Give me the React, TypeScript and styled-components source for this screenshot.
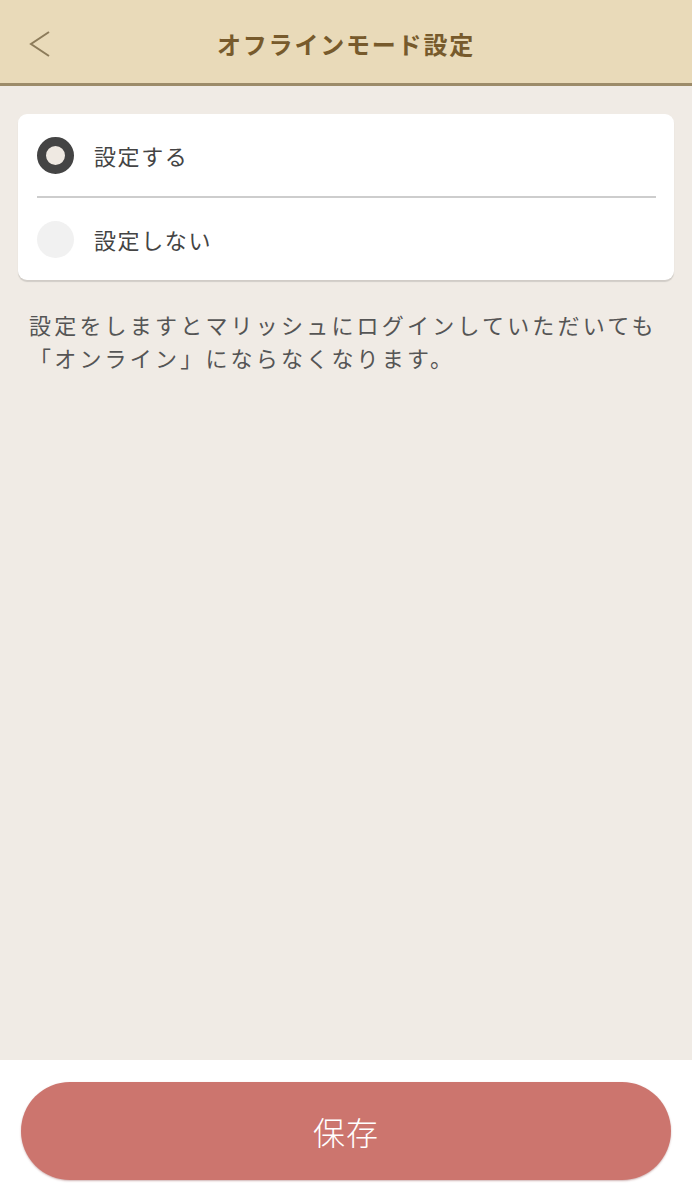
import React, { useState } from "react";
import styled, { createGlobalStyle } from "styled-components";

const GlobalStyle = createGlobalStyle`
  html, body { margin: 0; padding: 0; }
  body {
    font-family: "Noto Sans CJK JP", "Noto Sans", sans-serif;
    background: #f0ebe5;
  }
  * { box-sizing: border-box; }
`;

const Page = styled.div`
  width: 692px;
  height: 1200px;
  display: flex;
  flex-direction: column;
  background: #f0ebe5;
`;

const Header = styled.header`
  height: 86px;
  flex: none;
  background: #e9dab9;
  border-bottom: 3px solid #9c8b69;
  display: grid;
  grid-template-columns: 80px 1fr 80px;
  align-items: center;
  padding-top: 4px;
`;

const BackButton = styled.button`
  border: none;
  background: none;
  padding: 0 0 0 28px;
  height: 100%;
  display: flex;
  align-items: center;
  cursor: pointer;
`;

const Title = styled.h1`
  margin: 0;
  text-align: center;
  font-size: 24px;
  font-weight: 700;
  color: #775a2c;
  letter-spacing: 1.8px;
`;

const Content = styled.main`
  flex: 1;
  padding: 28px 18px 0 18px;
  display: flex;
  flex-direction: column;
`;

const Card = styled.div`
  background: #fff;
  border-radius: 9px;
  box-shadow: 0 2px 1px rgba(0, 0, 0, 0.13);
  padding: 0 18px 0 19px;
`;

const Option = styled.label<{ $last?: boolean }>`
  height: ${(p) => (p.$last ? "82px" : "84px")};
  display: flex;
  align-items: center;
  gap: 20px;
  border-bottom: ${(p) => (p.$last ? "none" : "2px solid #cdcdcd")};
  cursor: pointer;
`;

const Radio = styled.span<{ $checked: boolean }>`
  width: 37px;
  height: 37px;
  flex: none;
  border-radius: 50%;
  background: ${(p) => (p.$checked ? "#efe9e2" : "#f1f1f1")};
  border: ${(p) => (p.$checked ? "9px solid #444" : "none")};
`;

const OptionText = styled.span`
  font-size: 22px;
  color: #444;
  letter-spacing: 1.6px;
`;

const Note = styled.p`
  margin: 28px 0 0 11px;
  font-size: 22px;
  line-height: 33px;
  color: #555;
  letter-spacing: 3.2px;
  white-space: nowrap;
`;

const Footer = styled.footer`
  height: 140px;
  flex: none;
  background: #fff;
  padding: 22px 21px 0 21px;
`;

const SaveButton = styled.button`
  width: 650px;
  height: 98px;
  border: none;
  border-radius: 49px;
  background: #cc756e;
  box-shadow: 0 1px 2px rgba(120, 40, 40, 0.35);
  color: #fff;
  font-family: "Noto Sans CJK JP", sans-serif;
  font-size: 32px;
  font-weight: 300;
  letter-spacing: 1px;
  cursor: pointer;
`;

export default function App() {
  const [value, setValue] = useState<"on" | "off">("on");
  return (
    <Page>
      <GlobalStyle />
      <Header>
        <BackButton aria-label="戻る">
          <svg width="24" height="28" viewBox="0 0 24 28">
            <path d="M21 2 L3 14 L21 26" fill="none" stroke="#8c7b5a" strokeWidth="2" />
          </svg>
        </BackButton>
        <Title>オフラインモード設定</Title>
        <div />
      </Header>
      <Content>
        <Card>
          <Option onClick={() => setValue("on")}>
            <Radio $checked={value === "on"} />
            <OptionText>設定する</OptionText>
          </Option>
          <Option $last onClick={() => setValue("off")}>
            <Radio $checked={value === "off"} />
            <OptionText>設定しない</OptionText>
          </Option>
        </Card>
        <Note>
          設定をしますとマリッシュにログインしていただいても
          <br />
          「オンライン」にならなくなります。
        </Note>
      </Content>
      <Footer>
        <SaveButton>保存</SaveButton>
      </Footer>
    </Page>
  );
}
